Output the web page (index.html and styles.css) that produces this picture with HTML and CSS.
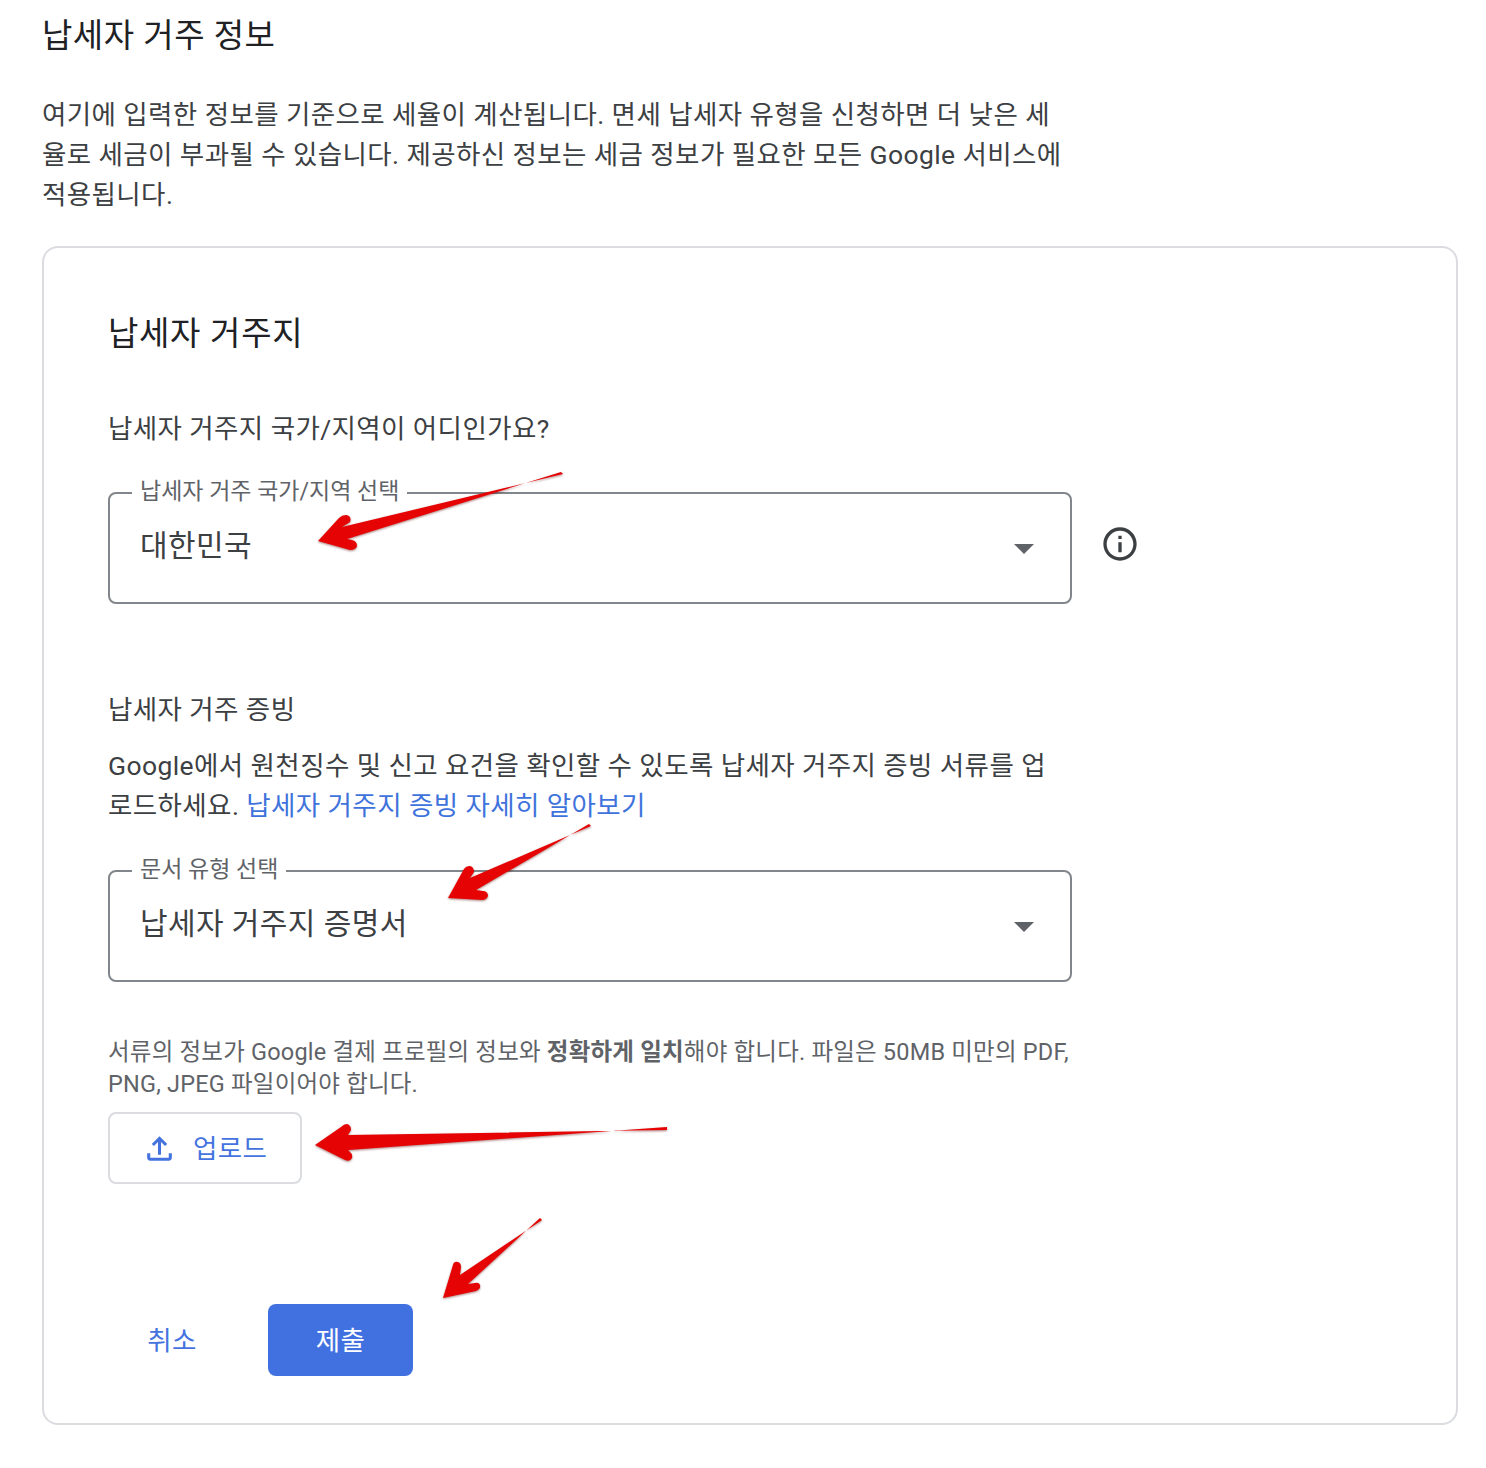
FILE: index.html
```html
<!DOCTYPE html>
<html lang="ko">
<head>
    <meta charset="UTF-8">
    <meta name="viewport" content="width=device-width, initial-scale=1.0">
    <title>납세자 거주 정보</title>
    <link rel="stylesheet" href="styles.css">
</head>
<body>
    <div class="page">
        <h1 class="page-title">납세자 거주 정보</h1>
        <p class="page-desc">여기에 입력한 정보를 기준으로 세율이 계산됩니다. 면세 납세자 유형을 신청하면 더 낮은 세<br>율로 세금이 부과될 수 있습니다. 제공하신 정보는 세금 정보가 필요한 모든 Google 서비스에<br>적용됩니다.</p>

        <div class="card">
            <h2 class="card-title">납세자 거주지</h2>
            <p class="question">납세자 거주지 국가/지역이 어디인가요?</p>

            <div class="select-row">
                <div class="select">
                    <span class="select-label">납세자 거주 국가/지역 선택</span>
                    <span class="select-value">대한민국</span>
                    <span class="select-caret"></span>
                </div>
                <svg class="info-icon" viewBox="0 0 24 24" fill="#3c4043">
                    <path d="M11 7h2v2h-2zm0 4h2v6h-2zm1-9C6.48 2 2 6.48 2 12s4.480 10 10 10 10-4.480 10-10S17.520 2 12 2zm0 18c-4.410 0-8-3.590-8-8s3.590-8 8-8 8 3.590 8 8-3.590 8-8 8z"/>
                </svg>
            </div>

            <h3 class="section-title">납세자 거주 증빙</h3>
            <p class="section-desc">Google에서 원천징수 및 신고 요건을 확인할 수 있도록 납세자 거주지 증빙 서류를 업<br>로드하세요. <a class="link" href="#">납세자 거주지 증빙 자세히 알아보기</a></p>

            <div class="select select-doc">
                <span class="select-label">문서 유형 선택</span>
                <span class="select-value">납세자 거주지 증명서</span>
                <span class="select-caret"></span>
            </div>

            <p class="hint">서류의 정보가 Google 결제 프로필의 정보와 <b>정확하게 일치</b>해야 합니다. 파일은 50MB 미만의 PDF,<br>PNG, JPEG 파일이어야 합니다.</p>

            <button class="btn-upload" type="button">
                <svg class="upload-icon" viewBox="0 0 24 24" fill="#4473e0">
                    <path d="M18 15v3H6v-3H4v3c0 1.100.9 2 2 2h12c1.100 0 2-.9 2-2v-3h-2zM7 9l1.410 1.410L11 7.830V16h2V7.830l2.590 2.580L17 9l-5-5-5 5z"/>
                </svg>
                <span class="btn-text">업로드</span>
            </button>

            <div class="actions">
                <button class="btn-cancel" type="button"><span class="btn-text">취소</span></button>
                <button class="btn-submit" type="button"><span class="btn-text">제출</span></button>
            </div>
        </div>

        <!-- 빨간 화살표 표시 -->
        <svg class="arrows" width="1486" height="1468" viewBox="0 0 1486 1468">
            <path d="M561 472 L563 474 L342 527 L350 522 Q352 516 346 515 Q342 515 339 518 L318 541 L350 550 Q356 550 357 546 Q357 541 352 540 L347 539 Z"/>
            <path d="M589 824 L591 826 L470 878 L474 872 Q474 867 470 866 Q466 866 464 869 L448 898 L483 900 Q488 899 488 895 Q487 891 483 891 L476 890 Z"/>
            <path d="M667 1127 L667 1130 L348 1135 L351 1130 Q351 1125 347 1124 Q344 1124 341 1127 L315 1145 L345 1160 Q350 1162 352 1158 Q353 1154 349 1151 L348 1150 Z"/>
            <path d="M540 1218 L542 1220 L460 1275 L461 1267 Q461 1263 458 1262 Q454 1261 453 1265 L443 1298 L476 1291 Q481 1289 480 1285 Q479 1282 475 1283 L468 1284 Z"/>
        </svg>
    </div>
</body>
</html>
```

FILE: styles.css
```css
body {
    margin: 0;
    background-color: white;
    font-family: Roboto, "Noto Sans CJK KR", sans-serif;
    color: #3c4043;
}

.page {
    position: relative;
    width: 1486px;
    height: 1468px;
    padding: 14px 28px 0 42px;
    box-sizing: border-box;
    overflow: hidden;
}

.page-title {
    margin: 0;
    font-size: 33px;
    line-height: 44px;
    font-weight: 400;
    letter-spacing: 0.5px;
    color: #202124;
}

.page-desc {
    margin: 37px 0 0;
    font-size: 26.5px;
    line-height: 40px;
    letter-spacing: 0.4px;
}

.card {
    margin-top: 31px;
    height: 1179px;
    padding: 64px 64px 0;
    border: 2px solid #dadce0;
    border-radius: 16px;
    box-sizing: border-box;
}

.card-title {
    margin: 0;
    font-size: 33px;
    line-height: 44px;
    font-weight: 400;
    letter-spacing: 0.7px;
    color: #202124;
}

.question {
    margin: 53px 0 0;
    font-size: 26.5px;
    line-height: 40px;
    letter-spacing: 0.4px;
}

.select-row {
    display: flex;
    align-items: center;
    gap: 28px;
    margin-top: 43px;
}

.select {
    position: relative;
    width: 964px;
    height: 112px;
    border: 2px solid #80868b;
    border-radius: 8px;
    box-sizing: border-box;
    display: flex;
    align-items: center;
    padding: 0 30px 4px;
}

.select-label {
    position: absolute;
    top: -17px;
    left: 22px;
    padding: 0 8px;
    background-color: white;
    font-size: 23px;
    line-height: 30px;
    color: #5f6368;
}

.select-value {
    font-size: 30px;
    line-height: 40px;
    letter-spacing: 0.4px;
    color: #3c4043;
}

.select-caret {
    position: absolute;
    right: 36px;
    top: 50px;
    width: 0;
    height: 0;
    border-left: 10px solid transparent;
    border-right: 10px solid transparent;
    border-top: 10px solid #5f6368;
}

.info-icon {
    width: 40px;
    height: 40px;
    margin-bottom: 8px;
}

.section-title {
    margin: 86px 0 0;
    font-size: 26.5px;
    line-height: 40px;
    letter-spacing: 0.4px;
    font-weight: 400;
}

.section-desc {
    margin: 16px 0 0;
    font-size: 26.5px;
    line-height: 40px;
    letter-spacing: 0.4px;
}

.link {
    color: #3f73dc;
    text-decoration: none;
}

.select-doc {
    margin-top: 44px;
}

.hint {
    margin: 54px 0 0;
    font-size: 23.5px;
    line-height: 32px;
    letter-spacing: 0.2px;
    color: #5f6368;
}

.hint b {
    font-weight: 700;
}

.btn-upload {
    display: flex;
    align-items: center;
    gap: 15px;
    margin-top: 12px;
    width: 194px;
    height: 72px;
    padding: 0 0 0 31px;
    background-color: white;
    border: 2px solid #dadce0;
    border-radius: 8px;
    box-sizing: border-box;
    font-family: inherit;
    font-size: 26.5px;
    letter-spacing: 0.4px;
    color: #4473e0;
}

.upload-icon {
    width: 37px;
    height: 37px;
}

.btn-text {
    display: block;
    margin-bottom: 4px;
}

.actions {
    display: flex;
    gap: 32px;
    margin-top: 120px;
}

.btn-cancel,
.btn-submit {
    height: 72px;
    padding: 0;
    border: none;
    border-radius: 8px;
    font-family: inherit;
    font-size: 26.5px;
    letter-spacing: 0.4px;
}

.btn-cancel {
    width: 128px;
    background-color: white;
    color: #4473e0;
}

.btn-submit {
    width: 145px;
    background-color: #4171e0;
    color: white;
}

.arrows {
    position: absolute;
    top: 0;
    left: 0;
    fill: #e60303;
    filter: drop-shadow(0 1px 1px rgba(90, 0, 0, 0.5));
}
```
